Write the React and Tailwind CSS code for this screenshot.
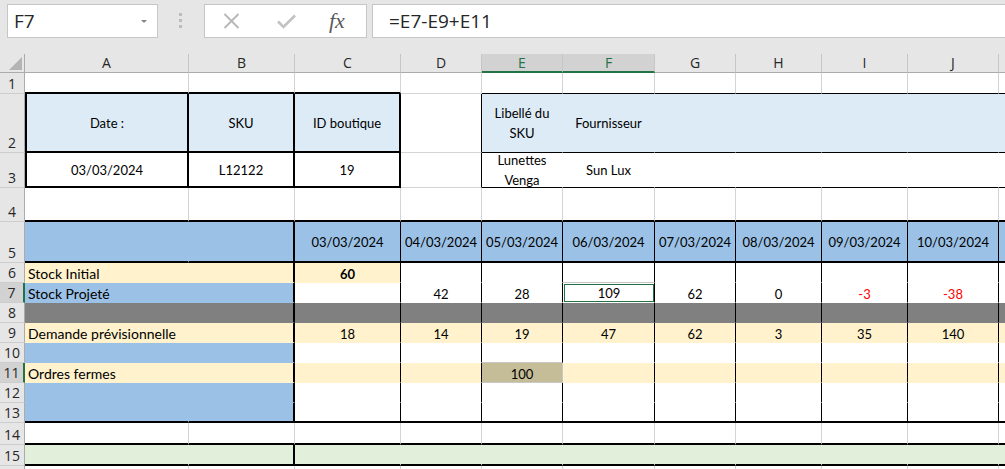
import React from "react";
import clsx from "clsx";

// column template: row header, A..J, K (cut off at the right edge)
const GRID = "grid grid-cols-[25px_164px_106px_106px_81px_81px_92px_81px_86px_86px_91px_80px]";
const COLS = ["A", "B", "C", "D", "E", "F", "G", "H", "I", "J", "K"];

const RB = {
  g: "border-r border-r-[#d4d4d4]",
  s: "border-r border-r-[#c8c8c8]",
  t: "border-r border-r-black",
  T: "border-r-2 border-r-black",
  n: "border-r border-r-transparent",
};
const BB = {
  g: "border-b border-b-[#d4d4d4]",
  s: "border-b border-b-[#c8c8c8]",
  t: "border-b border-b-black",
  T: "border-b-2 border-b-black",
  n: "border-b border-b-transparent",
};

const LBLUE = "bg-[#ddebf7]";
const BLUE = "bg-[#9bc2e6]";
const YEL = "bg-[#fff2cc]";
const GREY = "bg-[#808080]";
const GREEN = "bg-[#e2efda]";
const TAN = "bg-[#c4bd97]";
const W = "bg-white";

const dates = ["03/03/2024", "04/03/2024", "05/03/2024", "06/03/2024", "07/03/2024", "08/03/2024", "09/03/2024", "10/03/2024"];
const projete = ["", "42", "28", "109", "62", "0", "-3", "-38"];
const demande = ["18", "14", "19", "47", "62", "3", "35", "140"];

const mk = (bg, r, b, extra = {}) => ({ bg, r, b, ...extra });

function buildRows() {
  const rows = [];

  rows.push({ n: 1, h: "h-[21px]", cells: COLS.map((_, i) => mk(W, "g", i <= 2 ? "T" : i === 3 ? "g" : "t")) });

  const top2 = ["Date :", "SKU", "ID boutique"];
  rows.push({
    n: 2,
    h: "h-[59px]",
    cells: COLS.map((_, i) => {
      if (i <= 2) return mk(LBLUE, "T", "T", { l: i === 0, t: top2[i] });
      if (i === 3) return mk(W, "t", "g");
      if (i === 4) return mk(LBLUE, "n", "t", { t: <>Libellé du<br />SKU</>, wrap: true });
      if (i === 5) return mk(LBLUE, "n", "t", { t: "Fournisseur" });
      return mk(LBLUE, "n", "t");
    }),
  });

  const val3 = ["03/03/2024", "L12122", "19"];
  rows.push({
    n: 3,
    h: "h-[35px]",
    cells: COLS.map((_, i) => {
      if (i <= 2) return mk(W, "T", "T", { l: i === 0, t: val3[i] });
      if (i === 3) return mk(W, "t", "g");
      if (i === 4) return mk(W, "n", "t", { t: <>Lunettes<br />Venga</>, wrap: true });
      if (i === 5) return mk(W, "n", "t", { t: "Sun Lux" });
      return mk(W, "n", "t");
    }),
  });

  rows.push({ n: 4, h: "h-[34px]", cells: COLS.map(() => mk(W, "g", "T")) });

  rows.push({
    n: 5,
    h: "h-[41px]",
    cells: COLS.map((_, i) => {
      if (i === 0) return mk(BLUE, "n", "T");
      if (i === 1) return mk(BLUE, "T", "T");
      return mk(BLUE, "t", "T", { t: dates[i - 2] });
    }),
  });

  // rows 6..13: label block A:B, then the date columns
  const body = [
    { n: 6, lab: "Stock Initial", ab: YEL, c: YEL, rest: W },
    { n: 7, lab: "Stock Projeté", ab: BLUE, c: W, rest: W, vals: projete },
    { n: 8, ab: GREY, c: GREY, rest: GREY },
    { n: 9, lab: "Demande prévisionnelle", ab: YEL, c: YEL, rest: YEL, vals: demande },
    { n: 10, ab: BLUE, c: W, rest: W },
    { n: 11, lab: "Ordres fermes", ab: YEL, c: YEL, rest: YEL },
    { n: 12, ab: BLUE, c: W, rest: W },
    { n: 13, ab: BLUE, c: W, rest: W },
  ];
  body.forEach((row) => {
    const b = row.n === 13 ? "T" : "n";
    rows.push({
      n: row.n,
      h: "h-[20px]",
      low: true,
      cells: COLS.map((_, i) => {
        if (i === 0) return mk(row.ab, "n", b, { t: row.lab, left: true });
        if (i === 1) return mk(row.ab, "T", b);
        const cell = mk(i === 2 ? row.c : row.rest, "t", b);
        if (row.vals && i <= 9) {
          cell.t = row.vals[i - 2];
          if (cell.t.startsWith("-")) cell.red = true;
        }
        if (row.n === 6 && i === 2) {
          cell.t = "60";
          cell.bold = true;
        }
        if (row.n === 6 && i === 5) cell.b = "s";
        if (row.n === 7 && i === 5) cell.sel = true;
        if (row.n === 10 && i === 4) cell.b = "s";
        if (row.n === 11 && i === 4) {
          cell.bg = TAN;
          cell.r = "s";
          cell.b = "s";
          cell.t = "100";
        }
        return cell;
      }),
    });
  });

  rows.push({ n: 14, h: "h-[22px]", cells: COLS.map(() => mk(W, "g", "T")) });
  rows.push({
    n: 15,
    h: "h-[21px]",
    cells: COLS.map((_, i) => mk(GREEN, i === 1 ? "T" : "n", "T")),
  });
  rows.push({ n: 16, h: "h-[20px]", hideNum: true, cells: COLS.map(() => mk(W, "g", "g")) });
  return rows;
}

const rows = buildRows();
const hotCols = ["E", "F"];
const hotRows = [7, 11];

function Cell({ c, h, low }) {
  return (
    <div
      className={clsx(
        "flex overflow-hidden whitespace-nowrap font-['Lato',sans-serif]",
        c.left ? "text-[14px]" : "text-[13px]",
        c.red ? "text-[#ff0000]" : "text-black",
        h,
        c.bg,
        RB[c.r],
        BB[c.b],
        c.l && "border-l-2 border-l-black",
        c.left ? "justify-start pl-[3px]" : "justify-center text-center",
        low ? "items-end leading-[16px]" : "items-center",
        c.wrap ? "leading-[20px]" : !low && "leading-[16px]",
        c.bold && "font-bold"
      )}
    >
      {c.sel ? (
        <div className="flex flex-1 self-stretch items-end justify-center ml-[1px] mt-[1px] border border-[#217346]">
          {c.t}
        </div>
      ) : (
        c.t
      )}
    </div>
  );
}

function Toolbar() {
  return (
    <div className="flex h-[54px] items-start bg-[#e6e6e6] pt-[4px]">
      <div className="ml-[7px] flex h-[34px] w-[151px] items-center justify-between border border-[#c6c6c6] bg-white pl-[6px] pr-[10px]">
        <span className="font-['Open_Sans',sans-serif] text-[19px] text-[#262626]">F7</span>
        <span className="h-0 w-0 border-x-[3px] border-t-[3px] border-x-transparent border-t-[#858585]" />
      </div>
      <div className="ml-[21px] mt-[9px] flex flex-col gap-[3px]">
        <span className="h-[3px] w-[3px] bg-[#bdbdbd]" />
        <span className="h-[3px] w-[3px] bg-[#bdbdbd]" />
        <span className="h-[3px] w-[3px] bg-[#bdbdbd]" />
      </div>
      <div className="ml-[22px] flex h-[34px] w-[163px] items-center border border-[#c6c6c6] bg-white">
        <svg className="ml-[18px]" width="17" height="16" viewBox="0 0 17 16">
          <path d="M1.5 1 L15.5 15 M15.5 1 L1.5 15" stroke="#b8b8b8" strokeWidth="2" fill="none" />
        </svg>
        <svg className="ml-[37px]" width="19" height="15" viewBox="0 0 19 15">
          <path d="M1 7.5 L6.5 13 L18 1.5" stroke="#c2c2c2" strokeWidth="2.6" fill="none" />
        </svg>
        <span className="ml-[33px] font-['Liberation_Serif',serif] text-[22px] italic leading-none text-[#595959]">fx</span>
      </div>
      <div className="ml-[5px] flex h-[34px] flex-1 items-center border border-r-0 border-[#c6c6c6] bg-white pl-[16px]">
        <span className="font-['Open_Sans',sans-serif] text-[19px] text-[#262626]">=E7-E9+E11</span>
      </div>
    </div>
  );
}

export default function App() {
  return (
    <div className="h-[469px] w-[1005px] overflow-hidden bg-white">
      <Toolbar />

      <div className={GRID}>
        <div className="flex h-[19px] items-end justify-end border-r border-b border-r-[#ababab] border-b-[#ababab] bg-[#e6e6e6] pr-[2px] pb-[2px]">
          <svg width="13" height="13" viewBox="0 0 13 13">
            <path d="M13 0 L13 13 L0 13 Z" fill="#b4b4b4" />
          </svg>
        </div>
        {COLS.map((k) => {
          const hot = hotCols.includes(k);
          return (
            <div
              key={k}
              className={clsx(
                "flex h-[19px] items-center justify-center border-r border-r-[#c6c6c6] font-['Open_Sans',sans-serif] text-[14px] leading-none",
                hot ? "border-b-2 border-b-[#217346] bg-[#d2d2d2] text-[#217346]" : "border-b border-b-[#ababab] bg-[#e6e6e6] text-[#262626]"
              )}
            >
              {k === "K" ? "" : k}
            </div>
          );
        })}

        {rows.map((row) => (
          <React.Fragment key={row.n}>
            <div
              className={clsx(
                "flex items-end justify-center border-b border-b-[#cdcdcd] font-['Open_Sans',sans-serif] text-[14px] leading-[19px] text-[#262626]",
                row.h,
                hotRows.includes(row.n) ? "border-r-2 border-r-[#217346] bg-[#d2d2d2]" : "border-r border-r-[#ababab] bg-[#e6e6e6]"
              )}
            >
              {row.hideNum ? "" : row.n}
            </div>
            {row.cells.map((c, i) => (
              <Cell key={i} c={c} h={row.h} low={row.low} />
            ))}
          </React.Fragment>
        ))}
      </div>
    </div>
  );
}
